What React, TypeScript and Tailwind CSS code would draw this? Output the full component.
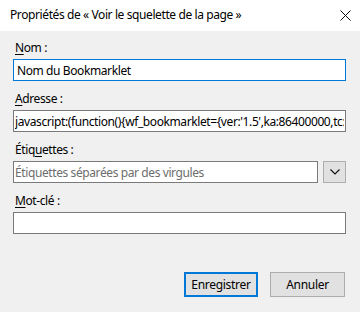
import { useState } from "react";

function Field({
  label,
  children,
}: {
  label: React.ReactNode;
  children: React.ReactNode;
}) {
  return (
    <div className="flex flex-col">
      <label className="h-[16px] leading-[16px] pl-[2px]">{label}</label>
      <div className="mt-[3px]">{children}</div>
    </div>
  );
}

export default function App() {
  const [name, setName] = useState("Nom du Bookmarklet");
  const [url, setUrl] = useState(
    "javascript:(function(){wf_bookmarklet={ver:'1.5',ka:86400000,tc:1,ts:0};var s=document.createElement('script');})()"
  );
  const [tags, setTags] = useState("");
  const [keyword, setKeyword] = useState("");

  return (
    <div className="w-[360px] h-[312px] bg-[#f0f0f0] text-[12px] tracking-[-0.4px] text-black font-['Noto_Sans',sans-serif] flex flex-col overflow-hidden">
      <header className="h-[31px] bg-white flex items-center justify-between pl-[10px] pr-[9px] shrink-0">
        <span className="leading-[16px] -mt-[2px]">
          Propriétés de « Voir le squelette de la page »
        </span>
        <svg width="11" height="11" viewBox="0 0 11 11" className="-mt-[1px]">
          <path d="M0.5 0.5 L10.5 10.5 M10.5 0.5 L0.5 10.5" stroke="#111" strokeWidth="1" />
        </svg>
      </header>

      <div className="flex flex-col gap-[10px] pt-[9px] pl-[13px] pr-[14px]">
        <Field
          label={
            <>
              <span className="underline underline-offset-2">N</span>om :
            </>
          }
        >
          <div className="h-[22px] border border-[#0078d7] bg-white flex items-center">
            <input
              value={name}
              onChange={(e) => setName(e.target.value)}
              className="w-full h-full px-[3px] outline-none bg-transparent tracking-[-0.4px]"
            />
          </div>
        </Field>

        <Field
          label={
            <>
              <span className="underline underline-offset-2">A</span>dresse :
            </>
          }
        >
          <div className="h-[22px] border border-[#7a7a7a] bg-white flex items-center overflow-hidden">
            <input
              value={url}
              onChange={(e) => setUrl(e.target.value)}
              className="w-full h-full px-[1px] outline-none bg-transparent tracking-[-0.4px]"
            />
          </div>
        </Field>

        <Field
          label={
            <>
              Étiq<span className="underline underline-offset-2">u</span>ettes :
            </>
          }
        >
          <div className="flex gap-[5px]">
            <div className="flex-1 h-[22px] border border-[#7a7a7a] bg-white flex items-center">
              <input
                value={tags}
                onChange={(e) => setTags(e.target.value)}
                placeholder="Étiquettes séparées par des virgules"
                className="w-full h-full px-[1px] outline-none bg-transparent tracking-[-0.4px] placeholder:text-[#6d6d6d]"
              />
            </div>
            <button className="w-[23px] h-[22px] border border-[#adadad] bg-[#e1e1e1] flex items-center justify-center">
              <svg width="10" height="6" viewBox="0 0 10 6">
                <path d="M0.5 0.5 L5 5 L9.5 0.5" fill="none" stroke="#111" strokeWidth="1.2" />
              </svg>
            </button>
          </div>
        </Field>

        <Field
          label={
            <>
              <span className="underline underline-offset-2">M</span>ot-clé :
            </>
          }
        >
          <div className="h-[22px] border border-[#7a7a7a] bg-white flex items-center">
            <input
              value={keyword}
              onChange={(e) => setKeyword(e.target.value)}
              className="w-full h-full px-[2px] outline-none bg-transparent"
            />
          </div>
        </Field>
      </div>

      <div className="flex justify-end gap-[12px] pr-[15px] mt-[38px]">
        <button className="w-[74px] h-[25px] border-2 border-[#0078d7] bg-[#e1e1e1] leading-none tracking-[-0.3px]">
          Enregistrer
        </button>
        <button className="w-[75px] h-[25px] border border-[#adadad] bg-[#e1e1e1] leading-none tracking-[-0.3px]">
          Annuler
        </button>
      </div>
    </div>
  );
}
